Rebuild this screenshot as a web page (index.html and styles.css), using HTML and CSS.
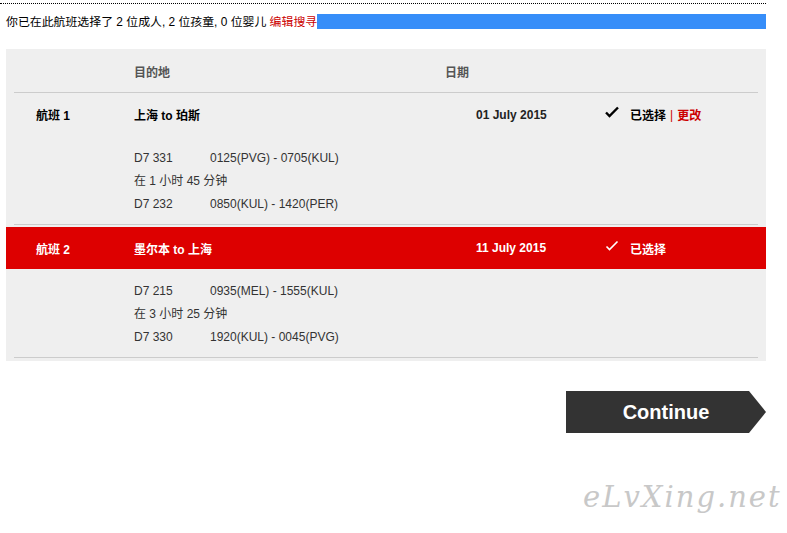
FILE: index.html
```html
<!DOCTYPE html>
<html lang="zh-CN">
<head>
  <meta charset="UTF-8">
  <title>选择航班</title>
  <link rel="stylesheet" href="styles.css">
</head>
<body>
  <div class="page">
    <div class="summary">
      <span class="summary-text">你已在此航班选择了 2 位成人, 2 位孩童, 0 位婴儿 <a href="#" class="edit-link">编辑搜寻</a></span>
      <span class="summary-bar"></span>
    </div>

    <div class="flights">
      <div class="flight-head">
        <span></span>
        <span>目的地</span>
        <span>日期</span>
        <span></span>
      </div>

      <div class="flight">
        <div class="flight-title">
          <span class="flight-no">航班 1</span>
          <span>上海 to 珀斯</span>
          <span class="flight-date">01 July 2015</span>
          <span class="flight-status">
            <svg class="check" width="14" height="12" viewBox="0 0 14 12"><path d="M1 6.5 L4.5 10 L13 1.5" fill="none" stroke="currentColor" stroke-width="2.4"/></svg>
            已选择 <span class="sep">|</span> <a href="#" class="change-link">更改</a>
          </span>
        </div>
        <div class="segments">
          <div class="segment"><span class="seg-no">D7 331</span><span>0125(PVG) - 0705(KUL)</span></div>
          <div class="segment">在 1 小时 45 分钟</div>
          <div class="segment"><span class="seg-no">D7 232</span><span>0850(KUL) - 1420(PER)</span></div>
        </div>
      </div>

      <div class="flight">
        <div class="flight-title active">
          <span class="flight-no">航班 2</span>
          <span>墨尔本 to 上海</span>
          <span class="flight-date">11 July 2015</span>
          <span class="flight-status">
            <svg class="check" width="14" height="12" viewBox="0 0 14 12"><path d="M1.5 6.5 L4.5 9.5 L12.5 1.5" fill="none" stroke="currentColor" stroke-width="1.6"/></svg>
            已选择
          </span>
        </div>
        <div class="segments">
          <div class="segment"><span class="seg-no">D7 215</span><span>0935(MEL) - 1555(KUL)</span></div>
          <div class="segment">在 3 小时 25 分钟</div>
          <div class="segment"><span class="seg-no">D7 330</span><span>1920(KUL) - 0045(PVG)</span></div>
        </div>
      </div>
    </div>

    <div class="actions">
      <button class="continue-btn">Continue</button>
    </div>
  </div>

  <div class="watermark">eLvXing.net</div>
</body>
</html>
```

FILE: styles.css
```css
* {
  box-sizing: border-box;
}

body {
  margin: 0;
  padding: 0;
  font-family: "Liberation Sans", Arial, "Noto Sans CJK SC", sans-serif;
  font-size: 12px;
  color: #000;
  background: #fff;
}

.page {
  width: 766px;
  padding-top: 3px;
}

.summary {
  border-top: 1px dotted #000;
  display: flex;
  align-items: center;
  padding: 10px 0 0 6px;
  height: 26px;
}

.summary-text {
  white-space: nowrap;
  font-size: 11.9px;
  line-height: 16px;
}

.edit-link {
  color: #cc0000;
  text-decoration: none;
}

.summary-bar {
  flex: 1;
  height: 15px;
  background-color: #378ef9;
}

.flights {
  margin: 20px 0 0 6px;
  background-color: #efefef;
  padding-bottom: 3px;
}

.flight-head,
.flight-title {
  display: grid;
  align-items: center;
  font-weight: bold;
}

.flight-head {
  height: 44px;
  color: #555;
  margin: 0 8px;
  padding-top: 2px;
  border-bottom: 1px solid #cccccc;
  grid-template-columns: 120px 311px 160px 1fr;
}

.flight-title {
  height: 43px;
  padding-left: 30px;
  grid-template-columns: 98px 311px 160px 1fr;
}

.flight-title.active {
  background-color: #dd0000;
  color: #fff;
  height: 42px;
  margin-top: 2px;
}

.flight-date {
  padding-left: 31px;
  color: #222;
}

.active .flight-date {
  color: #fff;
}

.flight-status {
  display: flex;
  align-items: center;
  gap: 4px;
}

.check {
  margin-right: 7px;
  margin-top: -5px;
}

.sep {
  color: #cc0000;
  font-weight: normal;
}

.change-link {
  color: #cc0000;
  text-decoration: none;
}

.segments {
  margin: 0 8px;
  padding: 11px 0 8px 120px;
  border-bottom: 1px solid #cccccc;
  color: #333;
}

.segment {
  display: flex;
  line-height: 23px;
}

.seg-no {
  width: 76px;
}

.actions {
  display: flex;
  justify-content: flex-end;
  padding-top: 30px;
}

.continue-btn {
  width: 200px;
  height: 42px;
  border: none;
  background-color: #333;
  color: #fff;
  font-family: "Liberation Sans", Arial, sans-serif;
  font-size: 20px;
  font-weight: bold;
  clip-path: polygon(0 0, 183px 0, 100% 50%, 183px 100%, 0 100%);
  cursor: pointer;
}

.watermark {
  position: absolute;
  left: 583px;
  top: 480px;
  font-family: "DejaVu Serif", serif;
  font-style: italic;
  font-size: 29px;
  letter-spacing: 2px;
  color: #c8c8c8;
}
```
